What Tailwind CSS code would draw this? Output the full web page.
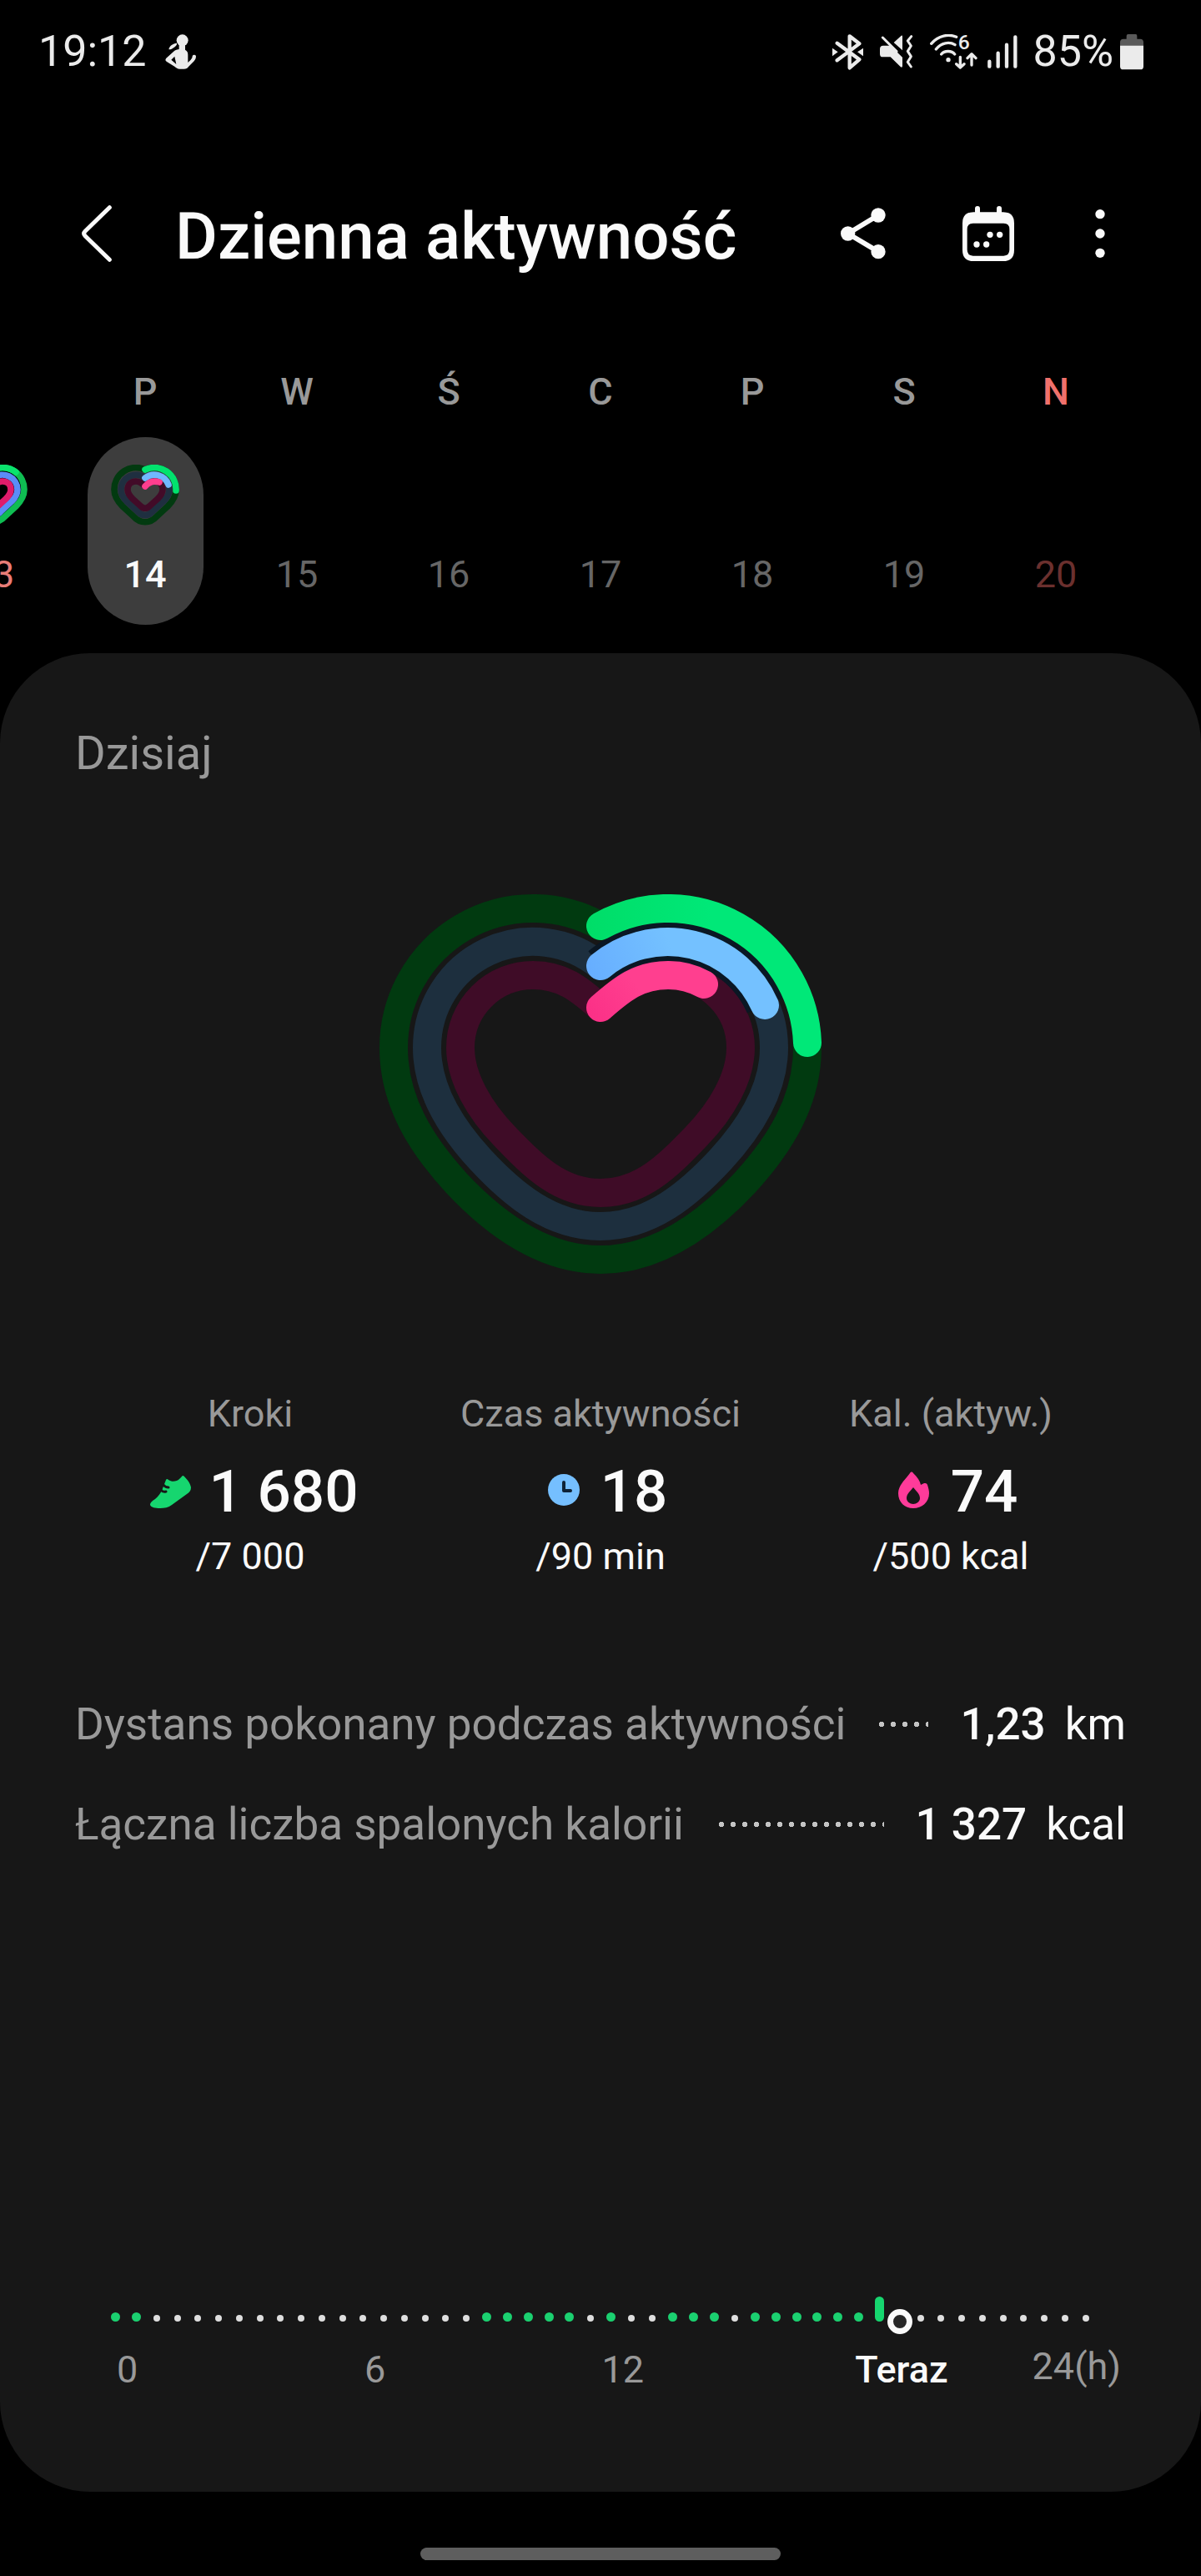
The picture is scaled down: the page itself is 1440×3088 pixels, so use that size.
<!DOCTYPE html>
<html lang="pl">
<head>
<meta charset="utf-8">
<title>Dzienna aktywność</title>
<meta name="viewport" content="width=device-width, initial-scale=1">
<script src="https://cdn.jsdelivr.net/npm/@tailwindcss/browser@4"></script>
</head>
<body class="min-h-screen bg-black font-[Roboto,sans-serif] text-[#fafafa]">

  <!-- pasek stanu -->
  <div class="flex h-[124px] items-center pl-[46px] pr-[69px] text-[52px] leading-[60px] text-[#ebebeb]">
    <span>19:12</span>
    <svg class="ml-[22px] h-[43px] w-[37px]" viewBox="0 0 111 129" fill="currentColor" aria-hidden="true">
      <ellipse cx="62" cy="22" rx="21" ry="21"/>
      <path d="M13 54C16 42 28 33 42 32C44 40 34 46 28 50C22 54 16 56 13 54Z"/>
      <path fill-rule="evenodd" d="M50 36H72V56C80 60 82 66 82 74V102L92 92C96 88 98 84 98 79A7 7 0 0 1 111 79C111 88 108 92 104 97L84 117C80 123 76 125 68 125H52C44 125 40 121 35 117L6 99C0 95 0 91 4 86L34 59C40 55 46 56 50 54ZM22 92L34 80L40 108Z"/>
    </svg>
    <div class="ml-auto flex items-center">
      <svg class="h-[43px] w-[37px]" viewBox="0 0 111 129" fill="none" stroke="currentColor" stroke-width="13" stroke-linecap="round" stroke-linejoin="round" aria-hidden="true">
        <path d="M17 32L97 91L62 121V7L97 34L17 94"/>
        <path d="M0 50L20 64L0 79ZM111 50L90 64L111 79Z" fill="currentColor" stroke="none"/>
      </svg>
      <svg class="ml-5 h-10 w-10" viewBox="0 0 120 120" aria-hidden="true">
        <path fill="currentColor" d="M0 50Q0 38 12 38H38L81 80V112Q80 119 74 114L38 79H10Q0 79 0 68ZM50 27L77 2Q81 0 81 5V55Z"/>
        <path fill="none" stroke="currentColor" stroke-width="9" stroke-linecap="round" stroke-linejoin="round" d="M10 9L60 59M113 5L100 21L112 39L100 58L112 77L100 97L112 114"/>
      </svg>
      <svg class="ml-5 h-[42px] w-[57px]" viewBox="0 0 171 126" fill="none" stroke="currentColor" stroke-width="10" stroke-linecap="round" stroke-linejoin="round" aria-hidden="true">
        <path d="M5 34C30 4 68 -2 95 10M22 54C40 30 70 26 90 38M41 72C52 58 78 58 89 72"/>
        <circle cx="66" cy="92" r="8" fill="currentColor" stroke="none"/>
        <path d="M109 82V119M95 107L109 120L123 107M150 111V72M135 86L150 71L165 86"/>
        <text x="101" y="55" font-size="74" font-weight="500" fill="currentColor" stroke="none">6</text>
      </svg>
      <svg class="ml-3 h-10 w-9" viewBox="0 0 108 120" fill="none" stroke="currentColor" stroke-width="13" stroke-linecap="round" aria-hidden="true">
        <path d="M7 95V113M38 65V113M69 35V113M100 7V113"/>
      </svg>
      <span class="ml-[18px]">85%</span>
      <svg class="ml-2 h-[43px] w-7" viewBox="0 0 84 129" aria-hidden="true">
        <path fill="#5a5a5a" d="M23 17V6Q23 0 29 0H56Q61 0 61 6V17H72Q84 17 84 29V42H0V29Q0 17 12 17Z"/>
        <path fill="currentColor" d="M0 41H84V116Q84 127 73 127H11Q0 127 0 116Z"/>
      </svg>
    </div>
  </div>

  <!-- nagłówek -->
  <header class="mt-[76px] flex h-40 items-center pl-[98px] pr-[115px]">
    <button type="button" aria-label="Wstecz">
      <svg class="h-[68px] w-9" viewBox="0 0 108 204" fill="none" stroke="currentColor" stroke-width="15" stroke-linecap="round" stroke-linejoin="round"><path d="M100 8L12 94Q4 102 12 110L100 196"/></svg>
    </button>
    <h1 class="ml-[76px] pt-2 text-[78px] leading-[96px] font-medium">Dzienna aktywność</h1>
    <button type="button" class="ml-auto" aria-label="Udostępnij">
      <svg class="h-[62px] w-[54px]" viewBox="0 0 162 186" fill="currentColor" stroke="currentColor"><path d="M135 27L26 93L135 158" fill="none" stroke-width="18"/><circle cx="135" cy="27" r="26" stroke="none"/><circle cx="26" cy="93" r="26" stroke="none"/><circle cx="135" cy="158" r="26" stroke="none"/></svg>
    </button>
    <button type="button" class="ml-[92px]" aria-label="Kalendarz">
      <svg class="h-[66px] w-[62px]" viewBox="0 0 186 198" fill="currentColor">
        <path fill-rule="evenodd" d="M45 9A9 9 0 0 1 63 9V22H123V9A9 9 0 0 1 141 9V22H146Q186 22 186 62V158Q186 198 146 198H40Q0 198 0 158V62Q0 22 40 22H45ZM38 62Q17 62 17 83V157Q17 179 38 179H148Q169 179 169 157V83Q169 62 148 62Z"/>
        <circle cx="99" cy="103" r="11"/><circle cx="134" cy="103" r="11"/><circle cx="51" cy="138" r="11"/><circle cx="86" cy="138" r="11"/>
      </svg>
    </button>
    <button type="button" class="ml-[97px]" aria-label="Więcej opcji">
      <svg class="h-[60px] w-3" viewBox="0 0 36 180" fill="currentColor"><circle cx="18" cy="20" r="17"/><circle cx="18" cy="90" r="17"/><circle cx="18" cy="160" r="17"/></svg>
    </button>
  </header>

  <!-- pasek tygodnia, zaczyna się od uciętej niedzieli -->
  <div class="mt-20 overflow-hidden">
    <div class="-ml-[99px] mr-[83px] grid grid-cols-8 text-center text-[45px] leading-[60px]">
      <div></div>
      <div class="font-medium text-[#999]">P</div>
      <div class="font-medium text-[#999]">W</div>
      <div class="font-medium text-[#999]">Ś</div>
      <div class="font-medium text-[#999]">C</div>
      <div class="font-medium text-[#999]">P</div>
      <div class="font-medium text-[#999]">S</div>
      <div class="font-medium text-[#f0716c]">N</div>
    </div>
    <div class="-ml-[99px] mr-[83px] mt-6 grid grid-cols-8 justify-items-center text-center text-[45px] leading-[60px] text-[#666]">
      <button type="button" class="flex h-[225px] w-[139px] flex-col items-center justify-between pt-[33px] pb-[30px] text-[#e87d78]">
        <svg class="h-[73px] w-[82px]" viewBox="0 0 82 73" fill="none" stroke-width="7.6" stroke-linejoin="round" aria-hidden="true">
          <path stroke="#0fbd52" d="M41 6A26 26 0 0 1 78 30C78 38 74 44 68 50L55 62C47 71 35 71 27 62L14 50C8 44 4 38 4 30A26 26 0 0 1 41 6Z"/>
          <path stroke="#5b8cf7" d="M41 16A18 18 0 0 1 70 30C70 36 67 40 63 44L50 56C45 62 37 62 32 56L19 44C15 40 12 36 12 30A18 18 0 0 1 41 16Z"/>
          <path stroke="#e01c6b" d="M41 26C45 22 48 20 52 20C58 20 62 24 62 30C62 35 59 38 56 41L46 50C43 53 39 53 36 50L26 41C23 38 20 35 20 30C20 24 24 20 30 20C34 20 37 22 41 26Z"/>
          <path stroke="#0be36d" stroke-linecap="round" d="M41 6A26 26 0 0 1 68 9"/>
        </svg>
        <span>13</span>
      </button>
      <button type="button" class="flex h-[225px] w-[139px] flex-col items-center justify-between rounded-full bg-[#3d3d3d] pt-[33px] pb-[30px] font-medium text-[#fafafa]">
        <svg class="h-[73px] w-[82px]" viewBox="0 0 82 73" fill="none" stroke-width="7.6" stroke-linejoin="round" aria-hidden="true">
          <path stroke="#023a10" d="M41 6A26 26 0 0 1 78 30C78 38 74 44 68 50L55 62C47 71 35 71 27 62L14 50C8 44 4 38 4 30A26 26 0 0 1 41 6Z"/>
          <path stroke="#1f2f40" d="M41 16A18 18 0 0 1 70 30C70 36 67 40 63 44L50 56C45 62 37 62 32 56L19 44C15 40 12 36 12 30A18 18 0 0 1 41 16Z"/>
          <path stroke="#420b28" d="M41 26C45 22 48 20 52 20C58 20 62 24 62 30C62 35 59 38 56 41L46 50C43 53 39 53 36 50L26 41C23 38 20 35 20 30C20 24 24 20 30 20C34 20 37 22 41 26Z"/>
          <g stroke-linecap="round">
            <path stroke="#02e26e" d="M41 6A26 26 0 0 1 78 31"/>
            <path stroke="#70b8ff" d="M41 16A18 18 0 0 1 69 24"/>
            <path stroke="#ff3e8e" d="M41 26C46 20 52 19 58 21"/>
          </g>
        </svg>
        <span>14</span>
      </button>
      <button type="button" class="flex h-[225px] w-[139px] flex-col items-center justify-end pb-[30px]">15</button>
      <button type="button" class="flex h-[225px] w-[139px] flex-col items-center justify-end pb-[30px]">16</button>
      <button type="button" class="flex h-[225px] w-[139px] flex-col items-center justify-end pb-[30px]">17</button>
      <button type="button" class="flex h-[225px] w-[139px] flex-col items-center justify-end pb-[30px]">18</button>
      <button type="button" class="flex h-[225px] w-[139px] flex-col items-center justify-end pb-[30px]">19</button>
      <button type="button" class="flex h-[225px] w-[139px] flex-col items-center justify-end pb-[30px] text-[#6b302e]">20</button>
    </div>
  </div>

  <!-- karta dnia -->
  <main class="mt-[34px] rounded-[108px] bg-[#171717] pt-[90px] pb-[116px]">
    <h2 class="px-[90px] text-[56px] leading-[60px] text-[#999]">Dzisiaj</h2>

    <svg class="mx-auto mt-[139px] h-[456px] w-[532px]" viewBox="0 0 532 456" fill="none" stroke-width="34" stroke-linejoin="round" role="img" aria-label="Postęp aktywności">
      <defs>
        <linearGradient id="g" gradientUnits="userSpaceOnUse" x1="250" y1="0" x2="400" y2="0"><stop stop-color="#00dd68"/><stop offset="1" stop-color="#00e878"/></linearGradient>
        <linearGradient id="b" gradientUnits="userSpaceOnUse" x1="250" y1="100" x2="350" y2="60"><stop stop-color="#66adff"/><stop offset="1" stop-color="#74c1ff"/></linearGradient>
        <linearGradient id="p" gradientUnits="userSpaceOnUse" x1="250" y1="150" x2="310" y2="110"><stop stop-color="#fb2f86"/><stop offset="1" stop-color="#ff3f8f"/></linearGradient>
      </defs>
      <path stroke="#013a10" d="M266 38A167 167 0 0 1 514 184C514 248 481 300 439 346C396 392 336 438 266 438C196 438 136 392 93 346C51 300 18 248 18 184A167 167 0 0 1 266 38Z"/>
      <path stroke="#1d2f3e" d="M266 86A127 127 0 0 1 474 184C474 234 446 279 410 318C372 359 326 398 266 398C206 398 160 359 122 318C86 279 58 234 58 184A127 127 0 0 1 266 86Z"/>
      <path stroke="#3f0c27" d="M266 136C292 113 312 97 347 97A87 87 0 0 1 434 184C434 220 411 259 381 290C348 324 316 358 266 358C216 358 184 324 151 290C121 259 98 220 98 184A87 87 0 0 1 185 97C220 97 240 113 266 136Z"/>
      <path stroke="#0a1724" stroke-width="46" d="M266 86A127 127 0 0 1 463 133"/>
      <g stroke-linecap="round">
        <path stroke="url(#g)" d="M266 38A167 167 0 0 1 514 178"/>
        <path stroke="url(#b)" d="M266 86A127 127 0 0 1 463 133"/>
        <path stroke="url(#p)" d="M266 136C292 113 312 97 347 97A87 87 0 0 1 390 108"/>
      </g>
    </svg>

    <div class="mt-[137px] grid grid-cols-3 px-[90px] text-center text-[45px] leading-[60px]">
      <div>
        <div class="text-[#999]">Kroki</div>
        <div class="mt-[23px] flex items-center justify-center gap-5 text-[71px] leading-[80px] font-medium">
          <svg class="h-[50px] w-[60px]" viewBox="0 0 60 50" aria-hidden="true">
            <path fill="#16d66f" d="M29 11Q30 9 32 11C36 14 42 13 45 10L48 7Q49 5 51 7C55 11 58 15 59 20C59 24 57 26 54 28L36 41C32 44 27 45 22 45C16 45 11 44 10 41C10 38 13 36 16 34C20 31 22 27 24 24Z"/>
            <path fill="none" stroke="#171717" stroke-width="3" stroke-linecap="round" d="M26 17Q28 20 32 20M23 23Q25 26 29 25"/>
          </svg>
          <span>1 680</span>
        </div>
        <div class="mt-2">/7 000</div>
      </div>
      <div>
        <div class="text-[#999]">Czas aktywności</div>
        <div class="mt-[23px] flex items-center justify-center gap-5 text-[71px] leading-[80px] font-medium">
          <svg class="h-[50px] w-[60px]" viewBox="0 0 60 50" aria-hidden="true">
            <circle cx="36" cy="23" r="19" fill="#75bfff"/>
            <path fill="none" stroke="#0e2236" stroke-width="4" stroke-linecap="round" stroke-linejoin="round" d="M36 14V24H44"/>
          </svg>
          <span>18</span>
        </div>
        <div class="mt-2">/90 min</div>
      </div>
      <div>
        <div class="text-[#999]">Kal. (aktyw.)</div>
        <div class="mt-[23px] flex items-center justify-center gap-5 text-[71px] leading-[80px] font-medium">
          <svg class="h-[50px] w-[60px]" viewBox="0 0 60 50" aria-hidden="true">
            <path fill="#ff3b9a" fill-rule="evenodd" d="M31 3C32 1 34 1 35 3C40 8 43 12 44 17L48 15C50 15 51 15 52 17C53 20 54 24 54 27C54 38 45 45 35 45C25 45 17 38 17 27C17 17 27 9 31 3ZM35 20C31 25 27 28 27 33C27 37 31 40 35 40C39 40 43 37 43 33C43 28 39 25 35 20Z"/>
          </svg>
          <span>74</span>
        </div>
        <div class="mt-2">/500 kcal</div>
      </div>
    </div>

    <div class="mt-[111px] px-[90px] text-[53px] leading-[120px]">
      <div class="flex items-center">
        <span class="text-[#999]">Dystans pokonany podczas aktywności</span>
        <span class="mr-[38px] ml-10 h-[6px] flex-1 bg-[radial-gradient(circle_at_3px_3px,#c4c4c4_3px,transparent_3px)] bg-[length:14px_6px]"></span>
        <span class="font-medium">1,23</span>
        <span class="ml-[23px]">km</span>
      </div>
      <div class="flex items-center">
        <span class="text-[#999]">Łączna liczba spalonych kalorii</span>
        <span class="mr-[38px] ml-[42px] h-[6px] flex-1 bg-[radial-gradient(circle_at_3px_3px,#c4c4c4_3px,transparent_3px)] bg-[length:14px_6px]"></span>
        <span class="font-medium">1 327</span>
        <span class="ml-[23px]">kcal</span>
      </div>
    </div>

    <!-- oś czasu: 48 odcinków po 30 minut -->
    <div class="mt-[506px] px-[126px]">
      <div id="timeline" class="flex h-[30px] items-end"></div>
      <div class="mt-7 -mr-[2px] ml-[2px] grid grid-cols-[repeat(48,minmax(0,1fr))] text-center text-[45px] leading-[60px] text-[#999]">
        <span class="col-span-2 col-start-1 row-start-1 justify-self-center whitespace-nowrap">0</span>
        <span class="col-span-2 col-start-13 row-start-1 justify-self-center whitespace-nowrap">6</span>
        <span class="col-span-4 col-start-24 row-start-1 justify-self-center whitespace-nowrap">12</span>
        <span class="col-span-7 col-start-36 row-start-1 justify-self-center font-medium whitespace-nowrap text-[#fafafa]">Teraz</span>
        <span class="col-span-6 col-start-43 row-start-1 -mt-1 -mr-7 justify-self-end whitespace-nowrap">24(h)</span>
      </div>
    </div>
  </main>

  <div class="mx-auto mt-[67px] mb-5 h-[15px] w-[30%] rounded-full bg-[#5e5e5e]"></div>

<script>
  // g = ruch, w = brak ruchu, b = słupek, n = teraz
  const slots = 'gg' + 'w'.repeat(16) + 'ggggg' + 'wgww' + 'gggw' + 'gggggg' + 'bn' + 'w'.repeat(9);
  const shapes = {
    g: 'size-[11px] rounded-full bg-[#1bd070]',
    w: 'size-2 rounded-full bg-[#dedede]',
    b: 'h-[30px] w-[11px] rounded-full bg-[#16d66f]',
    n: 'size-[30px] shrink-0 translate-y-1/2 rounded-full border-[7px] border-[#fafafa] bg-[#262626]'
  };
  document.getElementById('timeline').innerHTML = [...slots]
    .map(s => `<span class="flex min-w-0 flex-1 justify-center"><i class="${shapes[s]}"></i></span>`)
    .join('');
</script>
</body>
</html>
